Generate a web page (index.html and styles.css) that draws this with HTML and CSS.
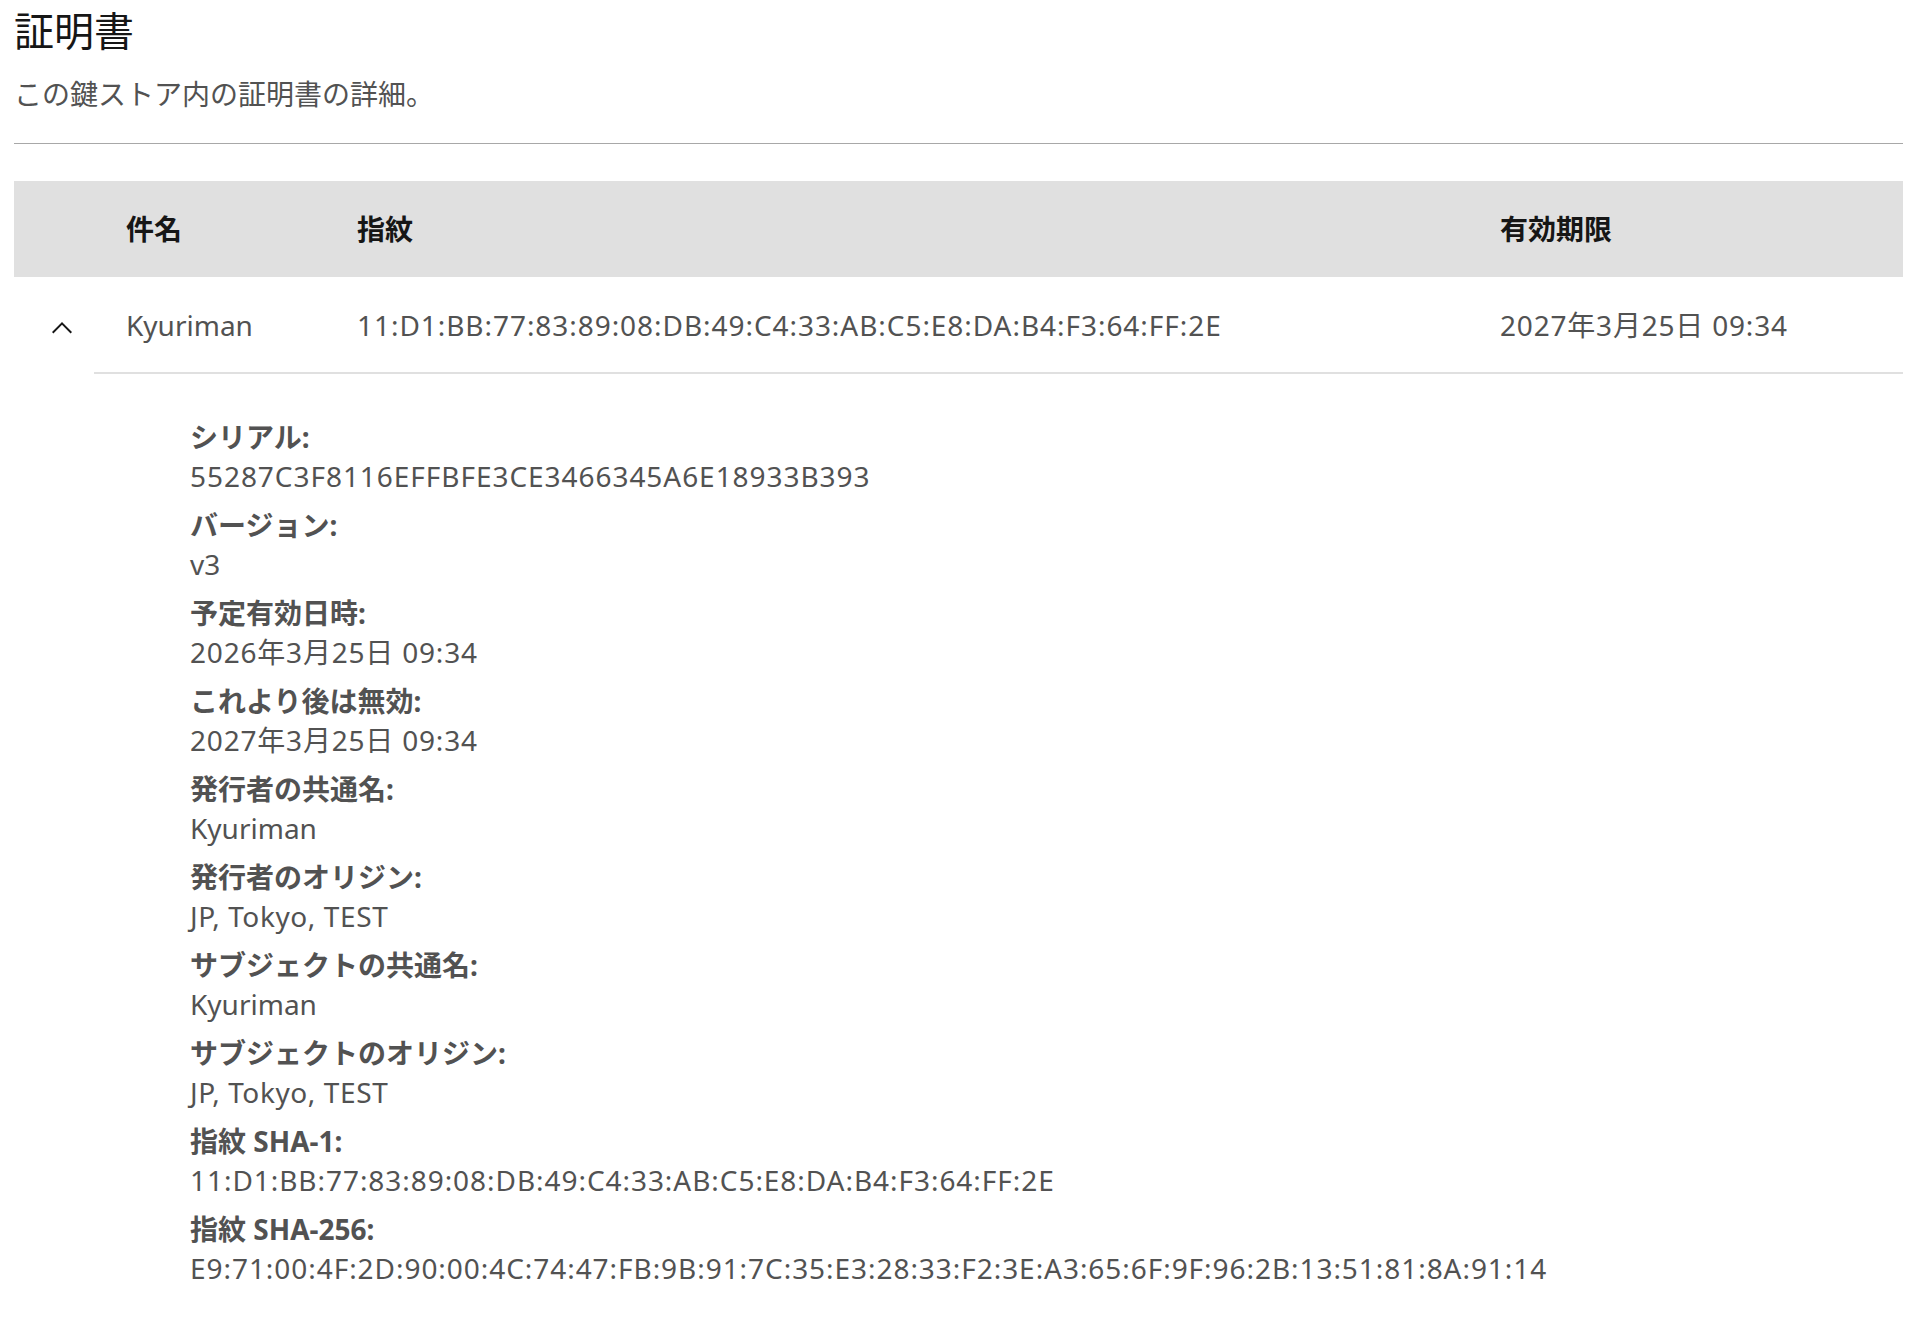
FILE: index.html
```html
<!DOCTYPE html>
<html lang="ja">
<head>
  <meta charset="UTF-8">
  <meta name="viewport" content="width=device-width, initial-scale=1.0">
  <link rel="stylesheet" href="styles.css">
</head>
<body>
  <div class="page">
    <!-- 見出し -->
    <h1 class="page-title">証明書</h1>
    <p class="page-desc">この鍵ストア内の証明書の詳細。</p>
    <hr class="divider">

    <!-- 証明書テーブル -->
    <div class="cert-table" role="table">
      <div class="cert-row cert-head" role="row">
        <div class="cell cell-expand"></div>
        <div class="cell">件名</div>
        <div class="cell">指紋</div>
        <div class="cell">有効期限</div>
      </div>

      <div class="cert-row cert-body" role="row">
        <div class="cell cell-expand">
          <button class="expand-btn" aria-label="行を折りたたむ">
            <svg width="32" height="32" viewBox="0 0 16 16" aria-hidden="true">
              <path d="M8 5L13 10 12.3 10.7 8 6.4 3.7 10.7 3 10z" fill="#161616"/>
            </svg>
          </button>
        </div>
        <div class="cell">Kyuriman</div>
        <div class="cell hex">11:D1:BB:77:83:89:08:DB:49:C4:33:AB:C5:E8:DA:B4:F3:64:FF:2E</div>
        <div class="cell date">2027年3月25日 09:34</div>
      </div>

      <!-- 展開された詳細 -->
      <div class="cert-detail">
        <dl class="detail-list">
          <div class="detail-item">
            <dt>シリアル:</dt>
            <dd class="hex">55287C3F8116EFFBFE3CE3466345A6E18933B393</dd>
          </div>
          <div class="detail-item">
            <dt>バージョン:</dt>
            <dd>v3</dd>
          </div>
          <div class="detail-item">
            <dt>予定有効日時:</dt>
            <dd class="date">2026年3月25日 09:34</dd>
          </div>
          <div class="detail-item">
            <dt>これより後は無効:</dt>
            <dd class="date">2027年3月25日 09:34</dd>
          </div>
          <div class="detail-item">
            <dt>発行者の共通名:</dt>
            <dd>Kyuriman</dd>
          </div>
          <div class="detail-item">
            <dt>発行者のオリジン:</dt>
            <dd class="place">JP, Tokyo, TEST</dd>
          </div>
          <div class="detail-item">
            <dt>サブジェクトの共通名:</dt>
            <dd>Kyuriman</dd>
          </div>
          <div class="detail-item">
            <dt>サブジェクトのオリジン:</dt>
            <dd class="place">JP, Tokyo, TEST</dd>
          </div>
          <div class="detail-item">
            <dt>指紋 SHA-1:</dt>
            <dd class="hex">11:D1:BB:77:83:89:08:DB:49:C4:33:AB:C5:E8:DA:B4:F3:64:FF:2E</dd>
          </div>
          <div class="detail-item">
            <dt>指紋 SHA-256:</dt>
            <dd class="hex">E9:71:00:4F:2D:90:00:4C:74:47:FB:9B:91:7C:35:E3:28:33:F2:3E:A3:65:6F:9F:96:2B:13:51:81:8A:91:14</dd>
          </div>
        </dl>
      </div>
    </div>
  </div>
</body>
</html>
```

FILE: styles.css
```css
/* リセットとベース設定 */
* {
  margin: 0;
  padding: 0;
  box-sizing: border-box;
}

body {
  font-family: "Noto Sans", "Noto Sans CJK JP", sans-serif;
  font-size: 28px;
  line-height: 40px;
  color: #525252;
  background: white;
}

.page {
  padding: 3px 13px 0 14px;
}

/* 見出し */
.page-title {
  font-size: 40px;
  line-height: 56px;
  font-weight: 400;
  color: #161616;
}

.page-desc {
  margin-top: 15px;
  color: #525252;
}

.divider {
  margin: 29px 0 37px;
  border: none;
  border-top: 1px solid #a8a8a8;
}

/* テーブル */
.cert-row {
  display: grid;
  grid-template-columns: 80px 231px 1fr 435px;
}

.cell {
  display: flex;
  align-items: center;
  padding-left: 32px;
  white-space: nowrap;
}

.cert-head {
  height: 96px;
  background: #e0e0e0;
  color: #161616;
  font-weight: 700;
}

.cert-body {
  height: 97px;
}

.cert-body .cell {
  border-bottom: 2px solid #e0e0e0;
}

.cert-body .cell-expand {
  border-bottom: none;
  padding-top: 4px;
}

.expand-btn {
  display: flex;
  width: 32px;
  height: 32px;
  border: none;
  background: none;
  cursor: pointer;
}

/* 値の字間（数字・コロンを少し広げる） */
.hex {
  letter-spacing: 0.95px;
}

.date {
  letter-spacing: 0.8px;
}

.place {
  letter-spacing: 0.6px;
}

/* 詳細 */
.cert-detail {
  padding: 44px 0 40px 176px;
}

.detail-item {
  margin-bottom: 10px;
}

.detail-item dt {
  font-weight: 700;
  line-height: 39px;
}

.detail-item dd {
  line-height: 39px;
}
```
